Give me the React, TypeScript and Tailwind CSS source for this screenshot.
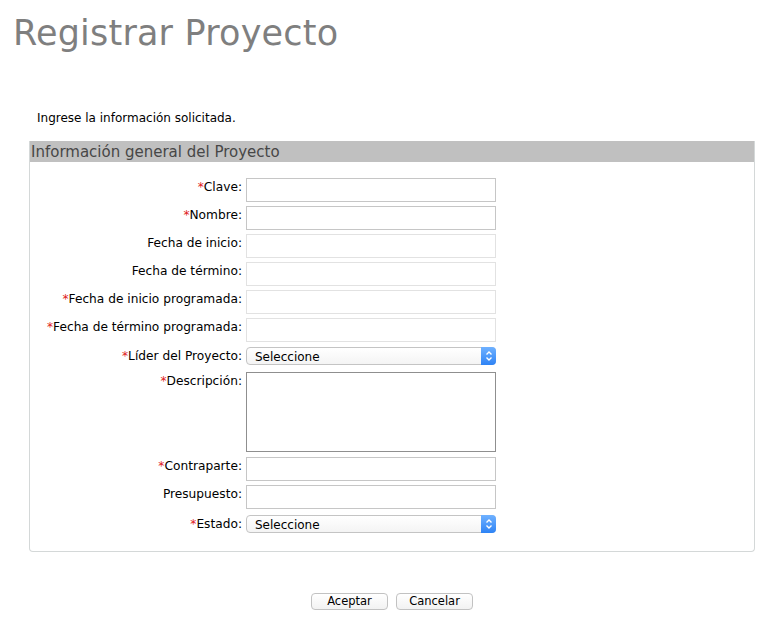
import React from 'react';

type Field = {
  label: string;
  required?: boolean;
  kind: 'input' | 'select' | 'textarea';
  tone?: 'dark' | 'light';
  mt: string;
};

const FIELDS: Field[] = [
  { label: 'Clave:', required: true, kind: 'input', tone: 'dark', mt: 'mt-[16px]' },
  { label: 'Nombre:', required: true, kind: 'input', tone: 'dark', mt: 'mt-[4px]' },
  { label: 'Fecha de inicio:', kind: 'input', tone: 'light', mt: 'mt-[4px]' },
  { label: 'Fecha de término:', kind: 'input', tone: 'light', mt: 'mt-[4px]' },
  { label: 'Fecha de inicio programada:', required: true, kind: 'input', tone: 'light', mt: 'mt-[4px]' },
  { label: 'Fecha de término programada:', required: true, kind: 'input', tone: 'light', mt: 'mt-[4px]' },
  { label: 'Líder del Proyecto:', required: true, kind: 'select', mt: 'mt-[5px]' },
  { label: 'Descripción:', required: true, kind: 'textarea', mt: 'mt-[7px]' },
  { label: 'Contraparte:', required: true, kind: 'input', tone: 'dark', mt: 'mt-[5px]' },
  { label: 'Presupuesto:', kind: 'input', tone: 'dark', mt: 'mt-[4px]' },
  { label: 'Estado:', required: true, kind: 'select', mt: 'mt-[6px]' },
];

function SelectBox() {
  return (
    <div className="relative flex h-[18px] w-[250px] items-center rounded-[4px] border border-[#c4c4c4] bg-gradient-to-b from-white to-[#f4f4f4] font-['DejaVu_Sans',sans-serif] text-[12px] text-black">
      <span className="pl-[8px] pt-[1px]">Seleccione</span>
      <span className="absolute -right-px -top-px flex h-[18px] w-[15px] items-center justify-center rounded-r-[4px] bg-gradient-to-b from-[#6fb1ff] to-[#2d83f5]">
        <svg width="8" height="12" viewBox="0 0 8 12" fill="none" stroke="white" strokeWidth="1.4">
          <path d="M1.5 4.5 L4 2 L6.5 4.5" />
          <path d="M1.5 7.5 L4 10 L6.5 7.5" />
        </svg>
      </span>
    </div>
  );
}

export default function App() {
  return (
    <div className="h-[635px] w-[773px] overflow-hidden bg-white font-['Verdana','DejaVu_Sans',sans-serif] text-black">
      <h1 className="pl-[13px] pt-[11px] text-[35px] leading-[44px] tracking-[0.2px] text-[#7f7f7f]">Registrar Proyecto</h1>

      <p className="ml-[37px] mt-[55px] text-[12px] leading-[16px]">Ingrese la información solicitada.</p>

      <div className="ml-[29px] mt-[15px] w-[726px] rounded-b-[4px] border-x border-b border-[#d4d8d8] pb-[18px]">
        <div className="h-[21px] bg-[#c0c0c0] pl-[1px] text-[15px] leading-[22px] text-[#474747]">
          Información general del Proyecto
        </div>

        {FIELDS.map((f) => (
          <div key={f.label} className={`flex ${f.mt}`}>
            <div className="w-[212px] pt-[2px] text-right text-[12.2px] leading-[15px]">
              {f.required && <span className="text-[#e0201c]">*</span>}
              {f.label}
            </div>
            <div className="ml-[4px]">
              {f.kind === 'input' && (
                <div
                  className={`h-[24px] w-[250px] border ${
                    f.tone === 'dark' ? 'border-[#c6c6c6]' : 'border-[#e2e2e2]'
                  } bg-white`}
                />
              )}
              {f.kind === 'select' && <SelectBox />}
              {f.kind === 'textarea' && <div className="h-[80px] w-[250px] border border-[#8f8f8f] bg-white" />}
            </div>
          </div>
        ))}
      </div>

      <div className="ml-[29px] mt-[41px] flex w-[726px] justify-center gap-[8px] font-['DejaVu_Sans',sans-serif] text-[11.5px]">
        <button className="h-[17px] w-[77px] rounded-[4px] border border-[#c2c2c2] bg-gradient-to-b from-white to-[#f2f2f2] leading-[15px]">
          Aceptar
        </button>
        <button className="h-[17px] w-[77px] rounded-[4px] border border-[#c2c2c2] bg-gradient-to-b from-white to-[#f2f2f2] leading-[15px]">
          Cancelar
        </button>
      </div>
    </div>
  );
}
